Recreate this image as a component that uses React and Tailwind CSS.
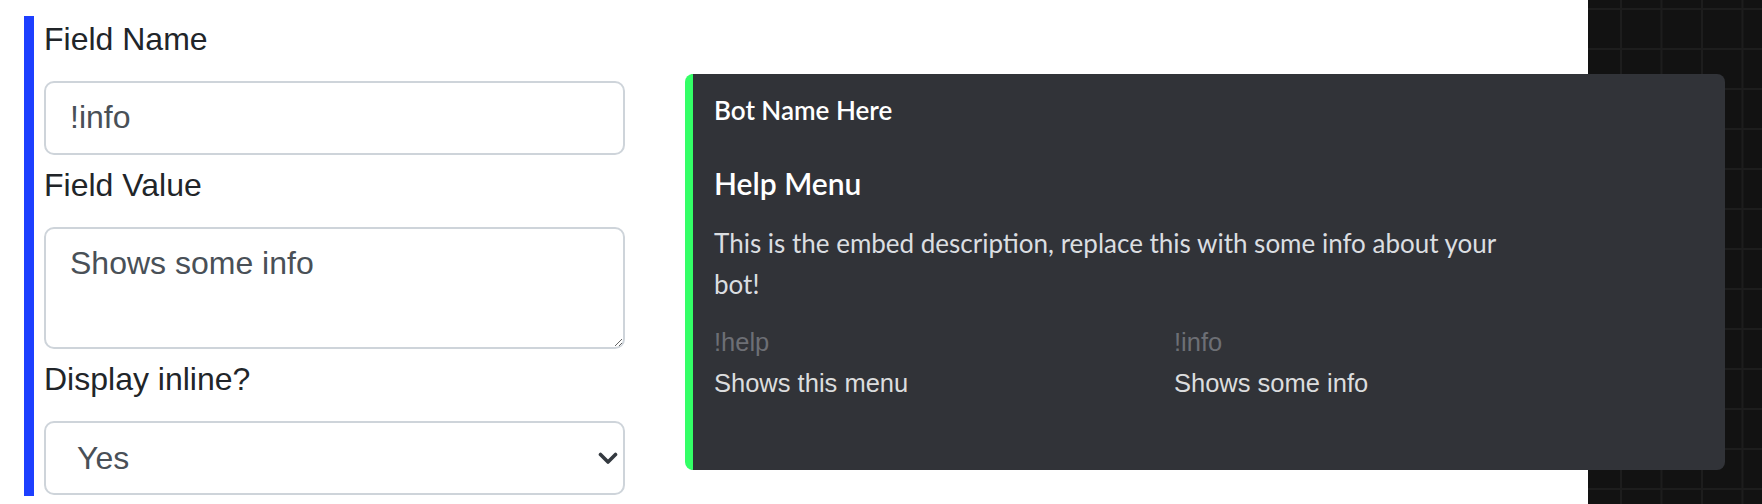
import React from 'react';

const formFont = { fontFamily: '"Liberation Sans", Arial, sans-serif' };
const embedFont = { fontFamily: 'Lato, "Noto Sans", sans-serif' };

const Label = ({ children, first }) => (
    <label className={`block text-[32px] leading-[46px] text-[#212529] ${first ? '' : 'mt-[7px]'} mb-[19px]`}>
        {children}
    </label>
);

const FieldEditor = () => (
    <div
        className="w-[601px] shrink-0 border-l-[10px] border-[#1d3fff] pl-[10px] pb-px flex flex-col"
        style={formFont}
    >
        <Label first>Field Name</Label>
        <input
            readOnly
            value="!info"
            className="h-[74px] w-full rounded-[10px] border-2 border-[#ced4da] bg-white px-6 pb-[2px] text-[32px] text-[#495057] outline-none"
        />

        <Label>Field Value</Label>
        <textarea
            readOnly
            value="Shows some info"
            className="h-[122px] w-full rounded-[10px] border-2 border-[#ced4da] bg-white px-6 pt-[10px] pb-3 text-[32px] leading-[48px] text-[#495057] outline-none"
        />

        <Label>Display inline?</Label>
        <div className="relative">
            <select
                defaultValue="yes"
                className="h-[74px] w-full appearance-none rounded-[10px] border-2 border-[#ced4da] bg-white pl-[31px] text-[32px] text-[#495057] outline-none"
            >
                <option value="yes">Yes</option>
                <option value="no">No</option>
            </select>
            <svg
                className="pointer-events-none absolute right-[7px] top-[31px]"
                width="20"
                height="13"
                viewBox="0 0 20 13"
                fill="none"
            >
                <path d="M2.5 2.5 10 10l7.5-7.5" stroke="#343a40" strokeWidth="3.6" strokeLinecap="round" strokeLinejoin="round" />
            </svg>
        </div>
    </div>
);

const EmbedPreview = () => (
    <div className="mt-[58px] ml-[60px] w-[1040px] h-[396px] shrink-0 rounded-lg border-l-8 border-[#33ff66] bg-[#313338] pl-[21px] pt-4 flex flex-col">
        <div className="text-[26px] leading-[40px] font-semibold text-white" style={embedFont}>
            Bot Name Here
        </div>
        <div className="mt-[31px] text-[30px] leading-[44px] font-semibold text-white" style={embedFont}>
            Help Menu
        </div>
        <p className="mt-[18px] max-w-[800px] text-[26px] leading-[41px] text-[#dbdee1]" style={embedFont}>
            This is the embed description, replace this with some info about your bot!
        </p>
        <div className="mt-[17px] flex text-[25.5px] leading-[41px]" style={formFont}>
            <div className="w-[460px]">
                <div className="text-[#6d6f75]">!help</div>
                <div className="text-[#dcddde]">Shows this menu</div>
            </div>
            <div>
                <div className="text-[#6d6f75]">!info</div>
                <div className="text-[#dcddde]">Shows some info</div>
            </div>
        </div>
    </div>
);

export default function App() {
    return (
        <div className="flex h-[504px] w-full overflow-hidden bg-[#121212] bg-[linear-gradient(to_right,#1d1d1d_2px,transparent_2px),linear-gradient(to_bottom,#1d1d1d_2px,transparent_2px)] bg-[size:40.5px_40px] bg-[position:0_8px]">
            <div className="flex w-[1588px] shrink-0 items-start bg-white pl-6 pt-4">
                <FieldEditor />
                <EmbedPreview />
            </div>
        </div>
    );
}
